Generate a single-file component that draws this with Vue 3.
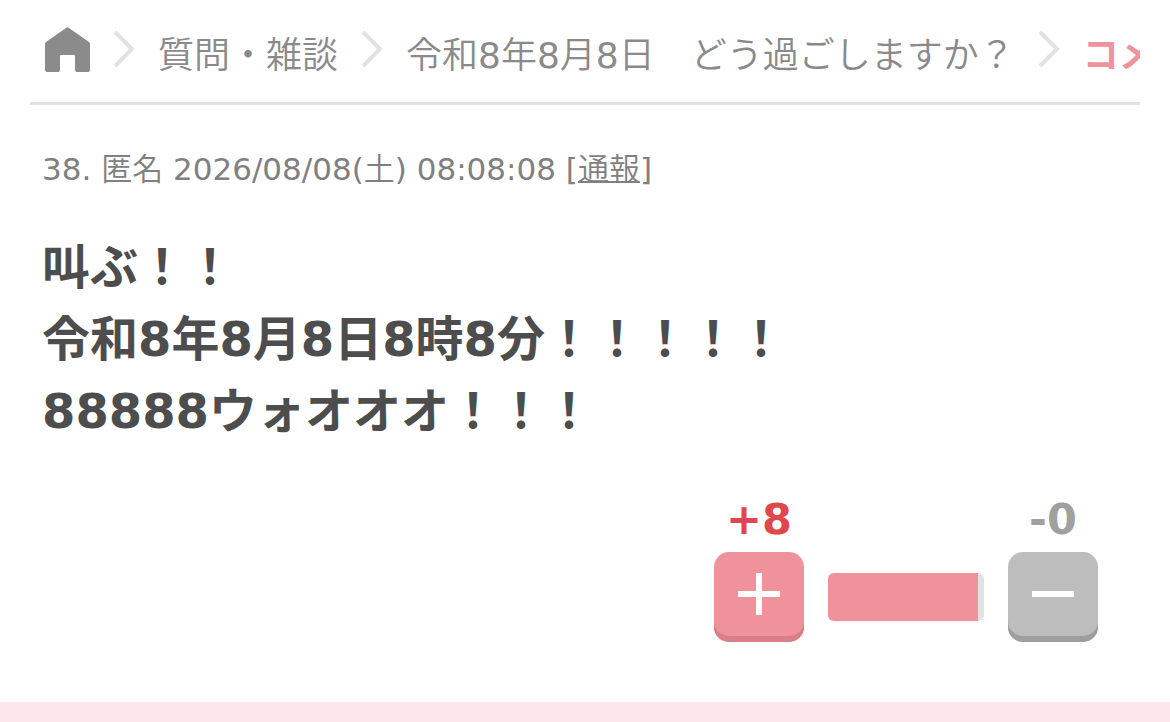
<script setup>
const crumbs = ['質問・雑談', '令和8年8月8日　どう過ごしますか？']
const lines = ['叫ぶ！！', '令和8年8月8日8時8分！！！！！', '88888ウォオオオ！！！']
const votes = { plus: 8, minus: 0 }
const share = 96
</script>

<template>
  <main class="page">
    <nav class="crumbs" aria-label="パンくず">
      <a href="#" class="home" aria-label="ホーム">
        <svg width="45" height="45" viewBox="0 0 45 45"><path d="M21 1Q22.500 -0.500 24 1L44 15Q45 15.500 45 17V43Q45 45 43 45H32Q30 45 30 43V29Q30 28 29 28H16Q15 28 15 29V43Q15 45 13 45H2Q0 45 0 43V17Q0 15.500 1 15Z" /></svg>
      </a>
      <template v-for="c in crumbs" :key="c">
        <svg class="sep" width="24" height="38" viewBox="0 0 24 38"><path d="M3 2 20 19 3 36" /></svg>
        <a href="#" class="crumb">{{ c }}</a>
      </template>
      <svg class="sep" width="24" height="38" viewBox="0 0 24 38"><path d="M3 2 20 19 3 36" /></svg>
      <span class="current">コメント</span>
    </nav>
    <article class="comment">
      <p class="meta">38. 匿名 2026/08/08(土) 08:08:08 [<a href="#">通報</a>]</p>
      <div class="body"><p v-for="l in lines" :key="l">{{ l }}</p></div>
      <div class="votes">
        <div class="vote plus">
          <span>+{{ votes.plus }}</span>
          <button type="button" aria-label="プラス"><svg width="42" height="42" viewBox="0 0 42 42"><path d="M0 21H42M21 0V42" /></svg></button>
        </div>
        <div class="bar"><div class="fill" :style="{ width: share + '%' }"></div></div>
        <div class="vote minus">
          <span>-{{ votes.minus }}</span>
          <button type="button" aria-label="マイナス"><svg width="42" height="42" viewBox="0 0 42 42"><path d="M0 21H42" /></svg></button>
        </div>
      </div>
    </article>
    <div class="band"></div>
  </main>
</template>

<style>
body { margin: 0; background: #fff; }
</style>

<style scoped>
.page { font-family: Verdana, "DejaVu Sans", "Noto Sans CJK JP DemiLight", "Noto Sans CJK JP", sans-serif; color: #808080; }
.crumbs { display: flex; align-items: center; height: 98px; margin: 0 30px; padding: 0 0 4px 15px; border-bottom: 3px solid #e2e2e2; overflow: hidden; white-space: nowrap; font-size: 36px; }
.home { display: flex; flex: none; fill: #8a8b8a; }
.sep { flex: none; margin: 0 22px; fill: none; stroke: #e2e2e2; stroke-width: 4; }
.crumb, .current { flex: none; padding-top: 6px; }
.crumb { color: #8a8a8a; text-decoration: none; }
.current { color: #ef929b; font-family: "Noto Sans CJK JP", sans-serif; font-weight: bold; }
.comment { padding: 42px 72px 60px 42px; }
.meta { margin: 0; font-size: 31px; line-height: 44px; }
.meta a { color: inherit; text-decoration-thickness: 2px; }
.body { margin-top: 40px; font-family: Verdana, "DejaVu Sans", "Noto Sans CJK JP", sans-serif; font-size: 48px; line-height: 72px; font-weight: bold; color: #4d4d4d; }
.body p { margin: 0; }
.votes { display: flex; justify-content: flex-end; align-items: flex-end; gap: 24px; margin-top: 44px; }
.vote { display: flex; flex-direction: column; align-items: center; gap: 5px; width: 90px; font-size: 43px; line-height: 56px; font-weight: bold; }
.plus { color: #e0474c; }
.minus { color: #a0a0a0; }
.vote button { display: flex; align-items: center; justify-content: center; width: 90px; height: 90px; padding: 0 0 6px; border: 0; border-radius: 15px; box-shadow: inset 0 -6px #d97f88; background: #ef929b; }
.minus button { box-shadow: inset 0 -6px #9e9e9e; background: #bdbdbd; }
.vote svg { fill: none; stroke: #fff; stroke-width: 6; }
.bar { width: 156px; height: 48px; margin-bottom: 21px; border-radius: 6px; overflow: hidden; background: #e2e2e2; }
.fill { height: 100%; background: #ef929b; }
.band { height: 20px; background: #fce8ea; }
</style>
